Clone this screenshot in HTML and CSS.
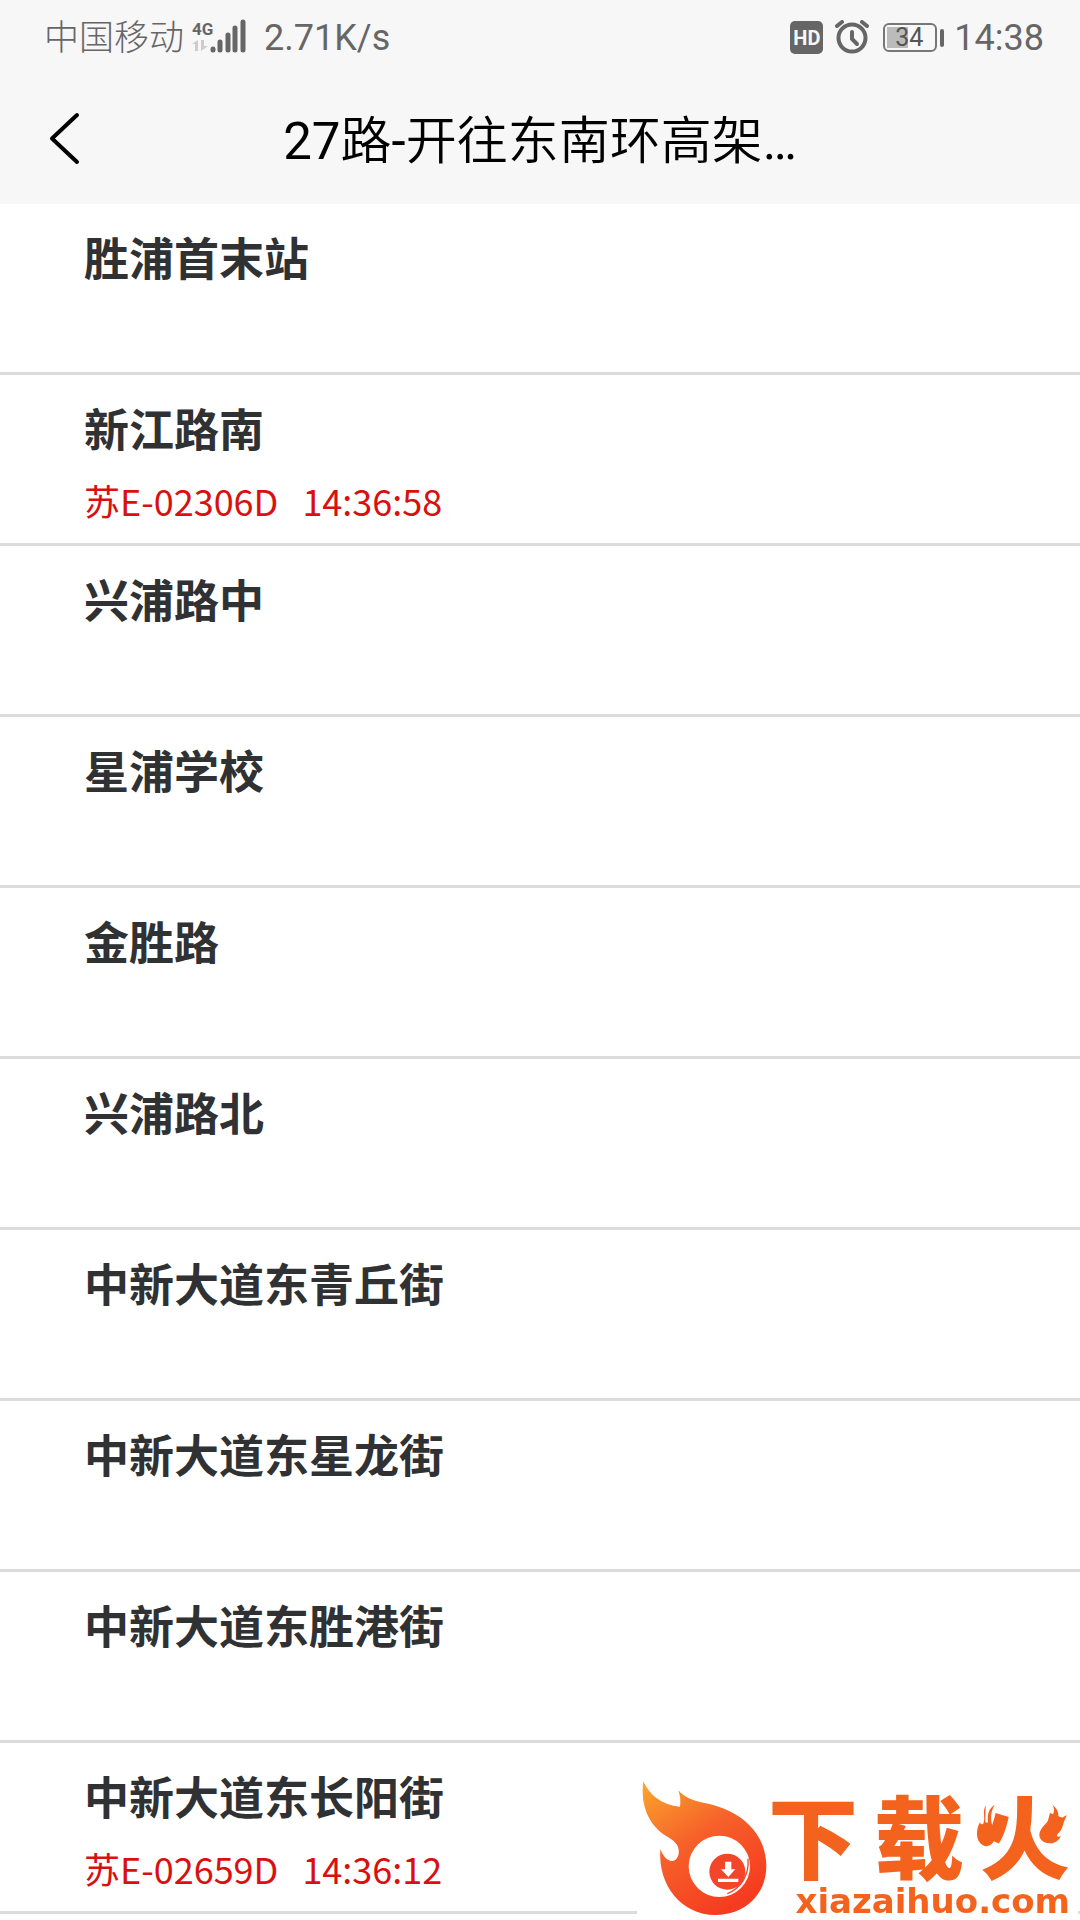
FILE: index.html
```html
<!DOCTYPE html>
<html lang="zh-CN">
<head>
    <meta charset="UTF-8">
    <meta name="viewport" content="width=device-width, initial-scale=1.0">
    <title>27路-开往东南环高架</title>
    <link rel="stylesheet" href="styles.css">
</head>
<body>
    <header class="top">
        <div class="status-bar">
            <span class="carrier">中国移动</span>
            <svg class="signal" width="56" height="36" viewBox="0 0 56 36">
                <text class="network" x="0" y="16">4G</text>
                <path d="M6 21v11H3v-7H0zM9 32V21h3v6h4z" fill="#ccc"/>
                <path d="M21 30v1M28 23v8M36 16v15M43 9v22M51 3v28" stroke="#666" stroke-width="5" stroke-linecap="round"/>
            </svg>
            <span class="speed">2.71K/s</span>
            <div class="status-right">
                <span class="hd">HD</span>
                <svg class="alarm" width="34" height="34" viewBox="0 0 34 34" fill="none" stroke="#666" stroke-linecap="round">
                    <circle cx="17" cy="18" r="13.5" stroke-width="4"/>
                    <path d="M17 12v7l5 5" stroke-width="4"/>
                    <path d="M2 6l5-4M32 6l-5-4" stroke-width="4"/>
                </svg>
                <span class="battery"><span class="battery-level">34</span></span>
                <span class="clock">14:38</span>
            </div>
        </div>
        <div class="nav">
            <button class="back" type="button" aria-label="返回">
                <svg width="34" height="54" viewBox="0 0 34 54">
                    <path d="M29 3L4 26.500L29 50" fill="none" stroke="#000" stroke-width="4" stroke-linecap="round" stroke-linejoin="round"/>
                </svg>
            </button>
            <h1><span class="latin">27</span>路<span class="latin">-</span>开往东南环高架<span class="latin">…</span></h1>
        </div>
    </header>

    <ul class="stops">
        <li><h2>胜浦首末站</h2></li>
        <li>
            <h2>新江路南</h2>
            <p class="bus"><span>苏E-02306D</span><span>14:36:58</span></p>
        </li>
        <li><h2>兴浦路中</h2></li>
        <li><h2>星浦学校</h2></li>
        <li><h2>金胜路</h2></li>
        <li><h2>兴浦路北</h2></li>
        <li><h2>中新大道东青丘街</h2></li>
        <li><h2>中新大道东星龙街</h2></li>
        <li><h2>中新大道东胜港街</h2></li>
        <li>
            <h2>中新大道东长阳街</h2>
            <p class="bus"><span>苏E-02659D</span><span>14:36:12</span></p>
        </li>
    </ul>

    <div class="watermark">
        <svg class="flame" width="128" height="137" viewBox="60 60 384 411">
            <defs>
                <linearGradient id="fire" x1="0" y1="0" x2="0.6" y2="1">
                    <stop offset="0" stop-color="#fba72c"/>
                    <stop offset="0.500" stop-color="#f6602a"/>
                    <stop offset="1" stop-color="#f63c20"/>
                </linearGradient>
            </defs>
            <path fill="url(#fire)" d="M70 64C88 105 125 136 180 140C183 122 180 106 175 91C193 112 216 121 250 128C367 150 439 222 439 318C439 405 372 465 286 465C185 465 113 377 121 267C129 288 141 303 156 303C171 302 178 286 176 270C174 247 153 237 129 222C78 184 62 125 70 64Z"/>
            <circle cx="298" cy="319" r="92" fill="#fff"/>
            <circle cx="322" cy="335" r="54" fill="#f2452a"/>
            <path d="M384 296C388 345 364 384 322 401" fill="none" stroke="#f2452a" stroke-width="4"/>
            <path d="M315 305h19v23h12l-21 23l-22-23h12zM294 356h61v10h-61z" fill="#fff"/>
        </svg>
        <div class="brand">
            <div class="brand-name"><span>下</span><span>载</span><span>火</span></div>
            <svg class="sparks" width="94" height="50" viewBox="0 0 282 150">
                <path d="M29 10C18 32 29 45 22 65C17 69 13 66 12 60C-3 87 -1 128 31 133C62 129 64 91 48 68C42 48 45 28 56 8C36 22 34 40 36 61C29 64 27 60 28 52Z"/>
                <path d="M230 10C240 28 230 45 211 63C191 82 182 102 199 117C217 130 248 124 254 101C246 107 240 103 243 97C263 85 258 64 273 40C257 45 247 57 246 71C239 78 235 75 237 67C253 46 250 24 230 10Z"/>
            </svg>
            <span class="brand-site">xiazaihuo.com</span>
        </div>
    </div>
</body>
</html>
```
FILE: styles.css
```css
* {
    box-sizing: border-box;
}
body {
    margin: 0;
    background-color: #fff;
    font-family: "Noto Sans CJK SC", sans-serif;
    color: #303133;
}
.top {
    background-color: #f7f7f7;
    font-family: Roboto, "Noto Sans CJK SC", sans-serif;
}
.status-bar {
    display: flex;
    align-items: center;
    height: 74px;
    padding: 0 36px 0 44px;
    color: #666;
    font-size: 36px;
    line-height: 42px;
}
.carrier {
    padding-top: 4px;
    font-size: 35px;
    font-weight: 300;
}
.signal {
    margin-left: 8px;
}
.network {
    font-family: Roboto, sans-serif;
    font-size: 17px;
    font-weight: 700;
    fill: #666;
}
.speed {
    margin-left: 16px;
    padding-top: 2px;
}
.status-right {
    display: flex;
    align-items: center;
    margin-left: auto;
}
.hd {
    width: 33px;
    height: 33px;
    border-radius: 5px;
    background-color: #666;
    color: #f7f7f7;
    font-size: 20px;
    font-weight: 700;
    line-height: 34px;
    text-align: center;
}
.alarm {
    margin-left: 12px;
}
.battery {
    position: relative;
    width: 54px;
    height: 29px;
    margin: 0 17px 0 14px;
    padding: 2px;
    border: 2px solid #777;
    border-radius: 6px;
}
.battery::after {
    content: "";
    position: absolute;
    top: 4px;
    right: -9px;
    width: 4px;
    height: 18px;
    border-radius: 2px;
    background-color: #666;
}
.battery-level {
    display: block;
    height: 21px;
    padding-right: 10px;
    background: linear-gradient(to right, #bbb 45%, transparent 45%);
    color: #555;
    font-size: 25px;
    line-height: 22px;
    text-align: right;
}
.clock {
    padding-top: 2px;
}
.nav {
    display: grid;
    grid-template-columns: 100px 1fr 100px;
    align-items: center;
    height: 130px;
}
.back {
    display: flex;
    padding: 0 0 0 48px;
    border: none;
    background: none;
    cursor: pointer;
}
.nav h1 {
    margin: 0;
    padding-top: 6px;
    color: #000;
    font-size: 51px;
    font-weight: 350;
    line-height: 60px;
    text-align: center;
    white-space: nowrap;
}
.latin {
    font-weight: 400;
}
.stops {
    margin: 0;
    padding: 0;
    list-style: none;
}
.stops li {
    height: 171px;
    padding: 21px 84px 0;
    border-bottom: 3px solid #dcdcdc;
}
.stops h2 {
    margin: 0;
    font-size: 45px;
    font-weight: 700;
    line-height: 64px;
}
.bus {
    display: flex;
    gap: 24px;
    margin: 14px 0 0;
    color: #d9100f;
    font-size: 36px;
    line-height: 52px;
}
.watermark {
    position: fixed;
    right: 2px;
    bottom: 0;
    display: flex;
    padding: 0 8px 3px 3px;
    background-color: #fff;
}
.brand {
    position: relative;
    display: flex;
    flex-direction: column;
    justify-content: flex-end;
    width: 302px;
    color: #f4631e;
    white-space: nowrap;
}
.brand-name {
    display: flex;
    justify-content: space-between;
    margin-bottom: 10px;
    font-size: 90px;
    font-weight: 900;
    line-height: 84px;
}
.sparks {
    position: absolute;
    top: 22px;
    right: 0;
    fill: #f4631e;
}
.brand-site {
    font-family: "DejaVu Sans", sans-serif;
    font-size: 34px;
    font-weight: 700;
    line-height: 32px;
    text-align: right;
}
```
